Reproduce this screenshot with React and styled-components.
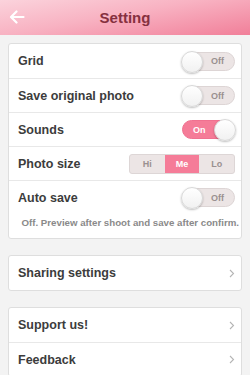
import React, { useState } from 'react'
import styled, { createGlobalStyle } from 'styled-components'

const GlobalStyle = createGlobalStyle`
  html, body {
    margin: 0;
    padding: 0;
    background: #f3f3f3;
    font-family: "Liberation Sans", Arial, sans-serif;
    -webkit-font-smoothing: antialiased;
  }
  * { box-sizing: border-box; }
`

const Page = styled.div`
  width: 250px;
  height: 375px;
  overflow: hidden;
  background: #f3f3f3;
`

const Header = styled.div`
  height: 35px;
  display: flex;
  align-items: center;
  justify-content: center;
  position: relative;
  background: linear-gradient(170deg, #fbd3dc 0%, #f8b2c2 45%, #f17f99 100%);
`

const Title = styled.div`
  font-size: 15px;
  font-weight: bold;
  color: #86303f;
`

const Back = styled.div`
  position: absolute;
  left: 9px;
  top: 10px;
  display: flex;
`

const Content = styled.div`
  padding: 8px 8px 0;
  display: flex;
  flex-direction: column;
  gap: 16px;
`

const Card = styled.div`
  background: #fff;
  border: 1px solid #dedede;
  border-radius: 3px;
`

const Row = styled.div`
  height: 34px;
  display: flex;
  align-items: center;
  justify-content: space-between;
  padding: 0 6px 0 9px;
  border-top: ${p => (p.$first ? 'none' : '1px solid #e8e8e8')};
`

const Label = styled.div`
  font-size: 12.5px;
  font-weight: bold;
  color: #3c3c3c;
`

const Track = styled.div`
  width: 53px;
  height: 19px;
  border-radius: 10px;
  background: ${p => (p.$on ? '#f57c98' : '#ece5e5')};
  border: 1px solid ${p => (p.$on ? '#f07190' : '#ddd5d5')};
  position: relative;
  display: flex;
  align-items: center;
  justify-content: ${p => (p.$on ? 'flex-start' : 'flex-end')};
  padding: 0 10px;
  cursor: pointer;
`

const TrackText = styled.span`
  font-size: 9px;
  font-weight: bold;
  color: ${p => (p.$on ? '#fff' : '#9a9090')};
`

const Knob = styled.div`
  position: absolute;
  top: -2px;
  ${p => (p.$on ? 'right: -2px;' : 'left: -2px;')}
  width: 22px;
  height: 22px;
  border-radius: 50%;
  background: linear-gradient(#ffffff, #f1f1f1);
  border: 1px solid #d8d8d8;
  box-shadow: 0 1px 2px rgba(0, 0, 0, 0.25);
`

const Segments = styled.div`
  display: flex;
  width: 106px;
  height: 20px;
  border: 1px solid #ddd6d6;
  border-radius: 3px;
  overflow: hidden;
  background: #ece5e5;
`

const Segment = styled.div`
  flex: 1;
  display: flex;
  align-items: center;
  justify-content: center;
  font-size: 9px;
  font-weight: bold;
  color: ${p => (p.$active ? '#fff' : '#9a9090')};
  background: ${p => (p.$active ? '#f57c98' : 'transparent')};
  cursor: pointer;
`

const Note = styled.div`
  font-size: 9.7px;
  font-weight: bold;
  color: #8a8a8a;
  padding: 3px 2px 10px 0;
  text-align: right;
  white-space: nowrap;
`

const Chevron = () => (
  <svg width="6" height="9" viewBox="0 0 6 9">
    <path d="M1 1l3.5 3.5L1 8" fill="none" stroke="#b5b5b5" strokeWidth="1.1" />
  </svg>
)

function Toggle({ on, onClick }) {
  return (
    <Track $on={on} onClick={onClick}>
      <TrackText $on={on}>{on ? 'On' : 'Off'}</TrackText>
      <Knob $on={on} />
    </Track>
  )
}

export default function App() {
  const [opts, setOpts] = useState({ grid: false, original: false, sounds: true, auto: false })
  const [size, setSize] = useState('Me')
  const flip = k => () => setOpts(o => ({ ...o, [k]: !o[k] }))

  return (
    <Page>
      <GlobalStyle />
      <Header>
        <Back>
          <svg width="16" height="14" viewBox="0 0 16 14">
            <path d="M14.5 7H2.5M7.5 1.5L2 7l5.5 5.5" fill="none" stroke="#fff" strokeWidth="2.2" strokeLinecap="round" strokeLinejoin="round" />
          </svg>
        </Back>
        <Title>Setting</Title>
      </Header>
      <Content>
        <Card>
          <Row $first>
            <Label>Grid</Label>
            <Toggle on={opts.grid} onClick={flip('grid')} />
          </Row>
          <Row>
            <Label>Save original photo</Label>
            <Toggle on={opts.original} onClick={flip('original')} />
          </Row>
          <Row>
            <Label>Sounds</Label>
            <Toggle on={opts.sounds} onClick={flip('sounds')} />
          </Row>
          <Row>
            <Label>Photo size</Label>
            <Segments>
              {['Hi', 'Me', 'Lo'].map(s => (
                <Segment key={s} $active={size === s} onClick={() => setSize(s)}>{s}</Segment>
              ))}
            </Segments>
          </Row>
          <Row>
            <Label>Auto save</Label>
            <Toggle on={opts.auto} onClick={flip('auto')} />
          </Row>
          <Note>Off. Preview after shoot and save after confirm.</Note>
        </Card>
        <Card>
          <Row $first>
            <Label>Sharing settings</Label>
            <Chevron />
          </Row>
        </Card>
        <Card>
          <Row $first>
            <Label>Support us!</Label>
            <Chevron />
          </Row>
          <Row>
            <Label>Feedback</Label>
            <Chevron />
          </Row>
        </Card>
      </Content>
    </Page>
  )
}
